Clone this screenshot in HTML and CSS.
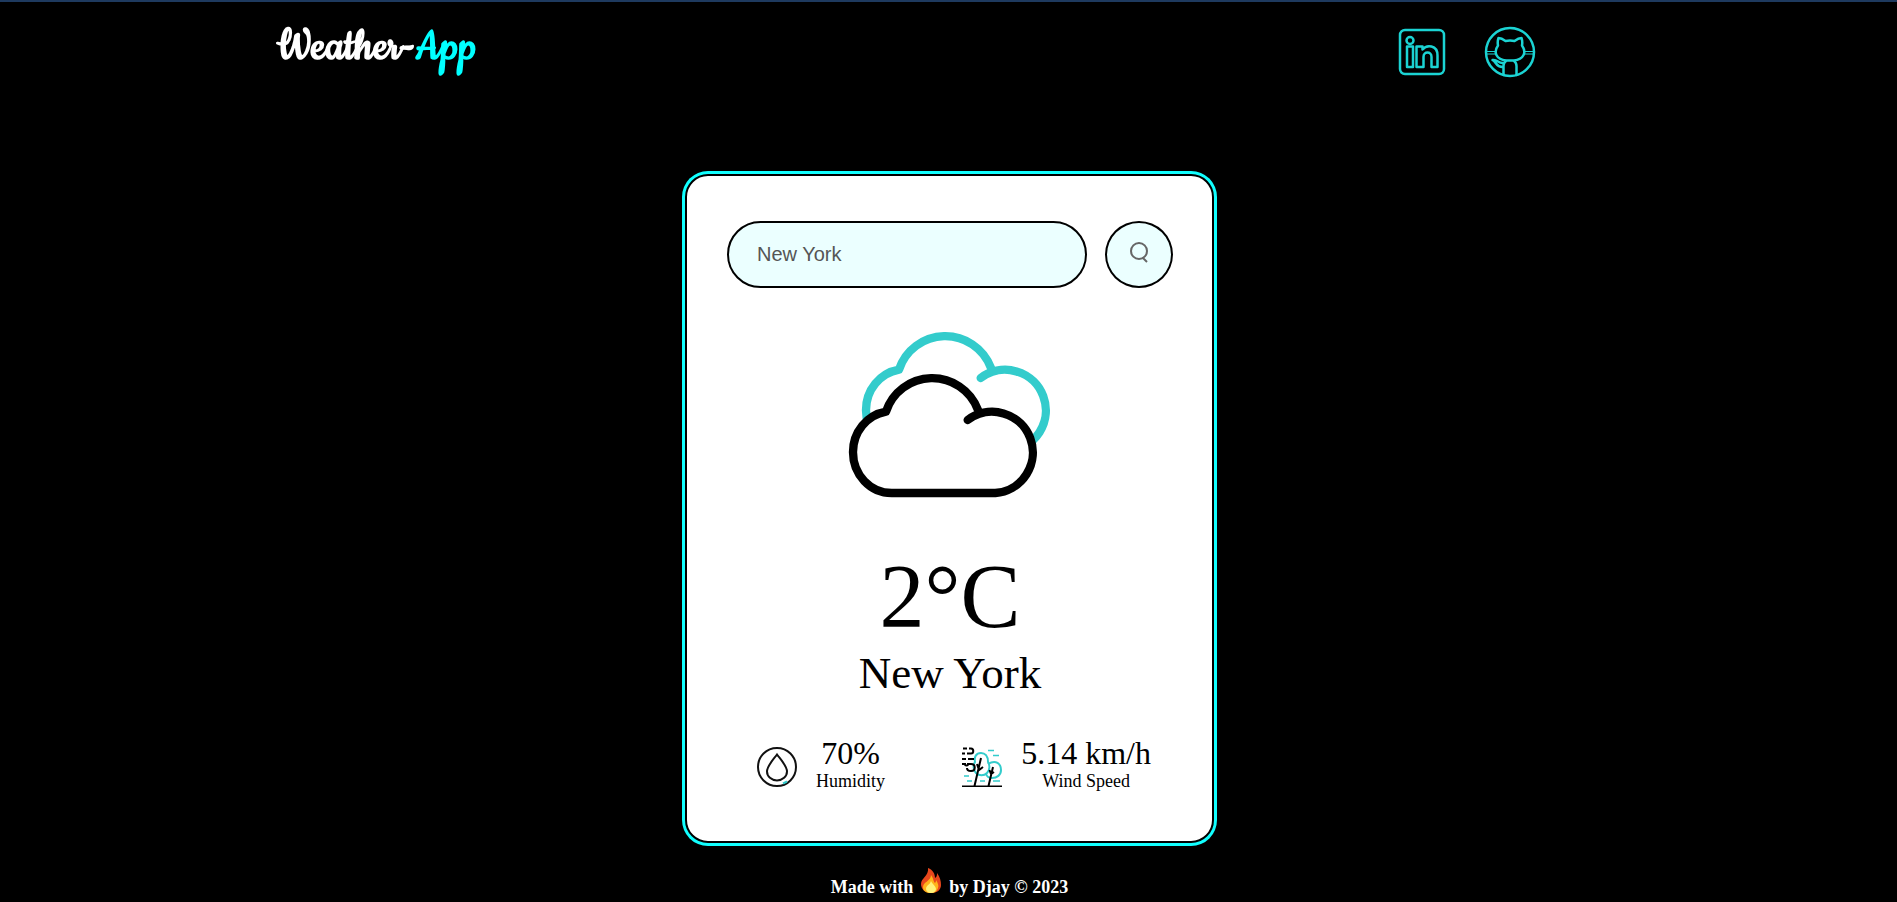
FILE: index.html
```html
<!DOCTYPE html>
<html lang="en">
<head>
<meta charset="utf-8">
<title>Weather-App</title>
<link rel="stylesheet" href="styles.css">
</head>
<body>
<header class="header">
  <h1 class="logo">Weather-<span class="logo-accent">App</span></h1>
  <nav class="social">
    <a class="social-link" href="#linkedin" aria-label="LinkedIn">
      <svg viewBox="0 0 52 52" width="52" height="52" fill="none" stroke="#1bd3d3" stroke-width="2.500" stroke-linejoin="round">
        <rect x="4" y="4" width="44" height="44" rx="5"/>
        <circle cx="14" cy="14.500" r="3.500"/>
        <path d="M11 20.500h6v20.500h-6zM20.500 20.500h6v3c4-5 15-5 15 6v11.500h-6V31c0-6-8-6-8 0v10h-7z"/>
      </svg>
    </a>
    <a class="social-link" href="#github" aria-label="GitHub">
      <svg viewBox="0 0 52 52" width="52" height="52" fill="none" stroke="#1bd3d3" stroke-width="2.500" stroke-linejoin="round" stroke-linecap="round">
        <circle cx="26" cy="26" r="24"/>
        <path d="M14.500 12c3 0 5 1.500 7 3 3-.7 6-.7 9 0 2-1.500 4-3 7-3 1 3 1 5 .5 7.500 5 7 1.500 14-8 15h-8c-9.500-1-13-8-8-15-.5-2.500-.5-4.500.5-7.500z"/>
        <path d="M19.500 49V40c0-2 1-4 2.500-5M32.500 49V40c0-2-1-4-2.500-5M19.500 41c-7 1-7-5-11-7 5-1 6 4 11 3"/>
        <path stroke-width="1" d="M3 25.500h9M3 28h9.500M40 25.500h9M39.500 28H49"/>
      </svg>
    </a>
  </nav>
</header>

<main class="card">
  <form class="search">
    <input class="search-input" type="text" aria-label="City" value="New York">
    <button class="search-button" type="button" aria-label="Search">
      <svg viewBox="0 0 20 22" width="20" height="22" fill="none" stroke="#666" stroke-width="2">
        <circle cx="10" cy="9" r="8"/>
        <path d="M13.500 15.500l4.500 4.500"/>
      </svg>
    </button>
  </form>

  <svg class="clouds" viewBox="0 0 720 600" width="240" height="200" fill="none" stroke-width="25" stroke-linecap="round" stroke-linejoin="round" role="img" aria-label="Cloudy">
    <path stroke="#3cc" d="M452 204A122 122 0 1 1 535 423H224A116 122 0 0 1 108 301A119 123 0 0 1 207 179A146 146 0 0 1 482 172"/>
    <path stroke="#000" fill="#fff" d="M413 330A122 122 0 1 1 496 549H185A116 122 0 0 1 69 427A119 123 0 0 1 168 305A146 146 0 0 1 443 298"/>
  </svg>

  <p class="temp">2°C</p>
  <h2 class="city">New York</h2>

  <section class="details">
    <div class="detail">
      <svg class="detail-icon" viewBox="0 0 40 40" width="40" height="40" fill="none" stroke="#111" stroke-width="2">
        <circle cx="20" cy="20" r="19"/>
        <path d="M20 7.500C16 13 10 19 10 24.500a10 9 0 0 0 20 0C30 19 24 13 20 7.500z"/>
        <path stroke="#3cc" d="M26 36.500l4-2"/>
      </svg>
      <div class="reading">
        <p class="value">70%</p>
        <p class="label">Humidity</p>
      </div>
    </div>
    <div class="detail">
      <svg class="detail-icon" viewBox="0 0 40 40" width="40" height="40" fill="none" stroke-width="2">
        <g stroke="#3cc">
          <path d="M13 15c-1-5 1-9 6-9 4 0 7 3 7 9 2 3 2 8-1 11-3 3-8 3-11 0-3-3-3-8-1-11z"/>
          <path d="M26 17c8-5 13 0 13 6 0 5-4 8-9 8-3 0-5-1-6-4"/>
          <path stroke-width="1.500" d="M26 3.500h6M31 8.500h6M2 29h5M5 34h5M18 34h5M31 34h7"/>
        </g>
        <g stroke="#000">
          <path d="M0 39.500h40M12.500 39L19 11M15 17l2 6 4-3M26.500 39L31 20M27.500 23l1.500 4 3-2"/>
          <path d="M1 1.500h4M7 1.500h2c3 0 3 5 0 5H5M0 6.500h3M0 12h4M6 12h6M0 17h3c0 2 3 2 3 0h3c5 0 5 7 0 7-2 0-4-1-4-3"/>
        </g>
      </svg>
      <div class="reading">
        <p class="value">5.14 km/h</p>
        <p class="label">Wind Speed</p>
      </div>
    </div>
  </section>
</main>

<footer class="footer">
  <span>Made with</span>
  <svg viewBox="0 0 20 25" width="20" height="25" role="img" aria-label="fire">
    <path fill="#e8471c" d="M7 0c5 2 7 6 7 10 2-1 2-3 2-5 3 4 4 8 4 12 0 5-4 8-10 8S0 21 0 16c0-6 8-8 7-16z"/>
    <path fill="#ffb31a" d="M10 7c3 4 2 6 4 8 1-1 1-2 1-3 2 3 3 6 2 8-1 3-3 5-7 5-5 0-8-2-8-6 0-5 8-6 8-12z"/>
    <path fill="#fff27a" d="M10 13c1 3 5 5 5 8 0 2-2 4-5 4s-5-2-5-4c0-4 4-4 5-8z"/>
  </svg>
  <span>by Djay © 2023</span>
</footer>
</body>
</html>
```
FILE: styles.css
```css
* {
  box-sizing: border-box;
  margin: 0;
}

body {
  min-height: 100vh;
  padding-left: 2px;
  border-top: 2px solid #1e3a5f;
  background: #000;
  color: #fff;
  font-family: "Liberation Serif", "Times New Roman", serif;
}

.header {
  display: flex;
  justify-content: space-between;
  width: 71%;
  margin: 0 auto;
  padding: 24px 86px 0 0;
}

.logo {
  font-family: Cookie, "Liberation Serif", cursive;
  font-size: 50px;
  font-weight: 700;
  line-height: 44px;
}

.logo-accent {
  color: #0ff;
}

.social {
  display: flex;
  gap: 36px;
}

.social-link {
  display: block;
  height: 52px;
}

.card {
  width: 529px;
  max-width: 100%;
  margin: 96px auto 0;
  padding: 45px 39px 48px 40px;
  border: 2px solid #000;
  border-radius: 23px;
  box-shadow: 0 0 0 3px #1ff;
  background: #fff;
  color: #000;
  text-align: center;
}

.search {
  display: flex;
  gap: 18px;
}

.search-input {
  flex: 1;
  min-width: 0;
  height: 67px;
  padding: 0 28px;
  border: 2px solid #000;
  border-radius: 34px;
  background: #ebffff;
  color: #555;
  font-family: "Liberation Sans", Arial, sans-serif;
  font-size: 20px;
}

.search-button {
  display: grid;
  place-items: center;
  width: 68px;
  height: 67px;
  padding: 0 0 4px;
  border: 2px solid #000;
  border-radius: 50%;
  background: #ebffff;
}

.clouds {
  display: block;
  margin: 22px auto 0;
}

.temp {
  margin-top: 36px;
  font-size: 90px;
  line-height: 102px;
}

.city {
  font-size: 45px;
  font-weight: 400;
  line-height: 50px;
}

.details {
  display: flex;
  justify-content: space-between;
  margin-top: 38px;
  padding: 0 22px 0 30px;
}

.detail {
  display: flex;
  align-items: center;
  gap: 19px;
}

.detail-icon {
  margin-top: 4px;
}

.value {
  font-size: 32px;
  line-height: 34px;
}

.label {
  font-size: 18px;
  line-height: 23px;
}

.footer {
  display: flex;
  justify-content: center;
  gap: 8px;
  margin-top: 25px;
  font-size: 18px;
  font-weight: 700;
  line-height: 20px;
}

.footer span {
  padding-top: 9px;
}
```
